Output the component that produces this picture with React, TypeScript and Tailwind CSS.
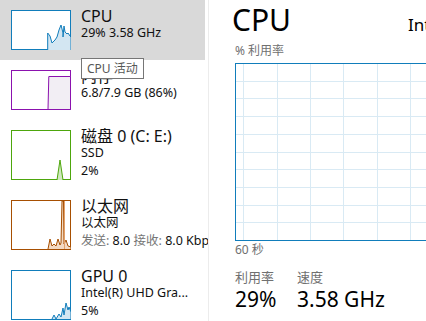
const FONT = "font-['Noto_Sans','Noto_Sans_CJK_SC',sans-serif]"

type Thumb = 'cpu' | 'mem' | 'disk' | 'eth' | 'gpu'

function Thumbnail({ kind, tall }: { kind: Thumb; tall: boolean }) {
  const h = tall ? 50 : 40
  const colors: Record<Thumb, string> = {
    cpu: '#117dbb',
    mem: '#8b12ae',
    disk: '#4da60c',
    eth: '#a74f01',
    gpu: '#117dbb',
  }
  const c = colors[kind]
  return (
    <svg width={60} height={h} viewBox={`0 0 60 ${h}`} className="shrink-0 block">
      <rect x={0.5} y={0.5} width={59} height={h - 1} fill="#ffffff" stroke={c} />
      {kind === 'cpu' && (
        <polyline
          points="36.7,40 36.7,23 39,26 41,33 44,30 46,27 48,20 50,15 52,23 52,27 53,16 54,22 56,24 57,23 59,26 60,27 60,40"
          fill="#d3e6f2"
          stroke={c}
          strokeWidth={1}
        />
      )}
      {kind === 'mem' && (
        <polygon points="37,39.5 37.8,6.5 59.5,6.5 59.5,39.5" fill="#f2eef4" stroke={c} strokeWidth={1} />
      )}
      {kind === 'disk' && (
        <polyline points="46,50 49,30 52,50" fill="#cfe8bd" stroke={c} strokeWidth={1} />
      )}
      {kind === 'eth' && (
        <>
          <polyline
            points="37,49 39,39 41,46 43,44 45,46 47,39 49,45 50,43 51,1 52.5,1 53,44 55,40 57,46 60,47 60,49"
            fill="#f3d9c2"
            stroke={c}
            strokeWidth={1}
          />
          <line x1={53.5} y1={1} x2={53.5} y2={49} stroke="#e3a06b" strokeWidth={1} />
        </>
      )}
      {kind === 'gpu' && (
        <polyline
          points="41,49 43,45 45,49 48,44 50,47 52,38 53,45 55,33 57,40 58,37 60,42 60,49"
          fill="#d3e6f2"
          stroke={c}
          strokeWidth={1}
        />
      )}
    </svg>
  )
}

interface Item {
  kind: Thumb
  title: string
  lines: React.ReactNode[]
  selected?: boolean
}

const items: Item[] = [
  { kind: 'cpu', title: 'CPU', lines: ['29% 3.58 GHz'], selected: true },
  { kind: 'mem', title: '内存', lines: ['6.8/7.9 GB (86%)'] },
  { kind: 'disk', title: '磁盘 0 (C: E:)', lines: ['SSD', '2%'] },
  {
    kind: 'eth',
    title: '以太网',
    lines: [
      '以太网',
      <span key="e">
        <span className="text-[#767676]">发送:</span> 8.0 <span className="text-[#767676]">接收:</span> 8.0 Kbps
      </span>,
    ],
  },
  { kind: 'gpu', title: 'GPU 0', lines: ['Intel(R) UHD Gra...', '5%'] },
]

function SidebarItem({ item }: { item: Item }) {
  const tall = item.lines.length > 1
  return (
    <div
      className={`flex w-[205px] gap-[10px] pl-[11px] py-[10px] ${item.selected ? 'bg-[#d9d9d9]' : ''} ${
        tall ? 'h-[70px]' : 'h-[60px]'
      }`}
    >
      <Thumbnail kind={item.kind} tall={tall} />
      <div className="flex flex-col -mt-[2px] whitespace-nowrap text-[#111111]">
        <div className="text-[16px] leading-[16px]">{item.title}</div>
        {item.lines.map((l, i) => (
          <div key={i} className="text-[12.5px] leading-[17.5px]">
            {l}
          </div>
        ))}
      </div>
    </div>
  )
}

function Grid() {
  const w = 300
  const h = 176
  const vs: number[] = []
  for (let x = 7.3; x < w; x += 33.33) vs.push(Math.round(x) + 0.5)
  const hs: number[] = []
  for (let k = 1; k < 10; k++) hs.push(Math.round(k * 17.7 - 1) + 0.5)
  return (
    <svg width={w} height={h} className="block">
      {vs.map((x) => (
        <line key={'v' + x} x1={x} y1={0} x2={x} y2={h} stroke="#d9eaf4" />
      ))}
      {hs.map((y) => (
        <line key={'h' + y} x1={0} y1={y} x2={w} y2={y} stroke="#d9eaf4" />
      ))}
    </svg>
  )
}

export default function App() {
  return (
    <div className={`${FONT} relative flex w-[426px] h-[321px] overflow-hidden bg-white`}>
      <div className="w-[209px] shrink-0 h-full overflow-hidden border-r border-[#ececec] flex flex-col">
        {items.map((it) => (
          <SidebarItem key={it.kind} item={it} />
        ))}
      </div>

      <div className="flex-1 flex flex-col pl-[26px] overflow-hidden whitespace-nowrap">
        <div className="flex items-baseline pt-[2px]">
          <div className="w-[176px] shrink-0 -ml-[3px] text-[30px] leading-[36px] text-black">CPU</div>
          <div className="text-[17px] text-black">Intel(R) Core(TM) i5-8250U CPU @ 1.60GHz</div>
        </div>
        <div className="mt-[5px] text-[12px] leading-[16px] text-[#707070]">% 利用率</div>
        <div className="mt-[4px] w-[300px] h-[178px] shrink-0 border border-[#117dbb]">
          <Grid />
        </div>
        <div className="mt-[1px] text-[12px] leading-[16px] text-[#707070]">60 秒</div>
        <div className="mt-[10px] flex">
          <div className="w-[62px] flex flex-col">
            <div className="text-[13px] leading-[18px] text-[#707070]">利用率</div>
            <div className="text-[21px] leading-[26px] text-black">29%</div>
          </div>
          <div className="flex flex-col">
            <div className="text-[13px] leading-[18px] text-[#707070]">速度</div>
            <div className="text-[21px] leading-[26px] text-black">3.58 GHz</div>
          </div>
        </div>
      </div>

      <div className="absolute left-[81px] top-[58px] w-[63px] h-[21px] border border-[#767676] bg-white flex items-center pl-[5px] text-[12px] leading-[14px] text-[#575757]">
        CPU 活动
      </div>
    </div>
  )
}
